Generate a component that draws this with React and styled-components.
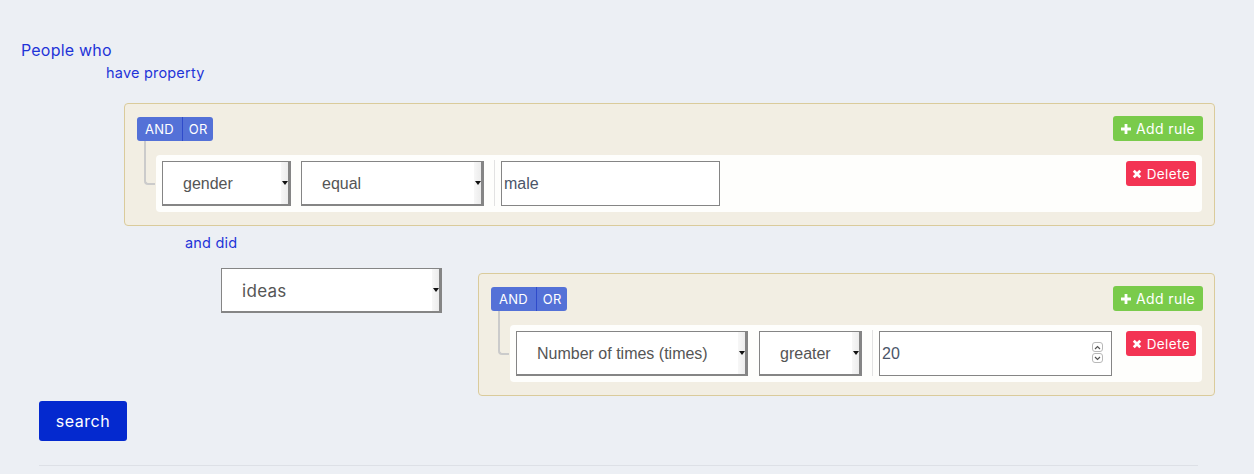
import React from 'react';
import styled, { createGlobalStyle } from 'styled-components';

const GlobalStyle = createGlobalStyle`
    html, body {
        margin: 0;
        padding: 0;
        background: #eceff4;
    }
    body {
        font-family: "Inter", "Open Sans", sans-serif;
    }
`;

const Page = styled.div`
    padding: 40px 39px 0 21px;
    display: flex;
    flex-direction: column;
    height: 474px;
    box-sizing: border-box;
`;

const Label = styled.div`
    color: #1f34d8;
    font-size: ${p => p.size || 14.5}px;
    letter-spacing: 0.2px;
    line-height: 20px;
    height: 20px;
    margin-left: ${p => p.indent || 0}px;
    margin-top: ${p => p.top || 0}px;
`;

const Group = styled.div`
    background: #f2eee3;
    border: 1px solid #dacb9b;
    border-radius: 4px;
    padding: 13px 11px 13px 12px;
    margin-left: ${p => p.indent || 0}px;
    margin-top: ${p => p.top || 0}px;
    flex: ${p => (p.grow ? 1 : 'none')};
`;

const GroupHeader = styled.div`
    display: flex;
    align-items: flex-start;
    justify-content: space-between;
    height: 24px;
`;

const Toggle = styled.div`
    display: flex;
    height: 24px;
    border-radius: 3px;
    overflow: hidden;
`;

const ToggleBtn = styled.button`
    border: none;
    background: #5471d7;
    color: #fff;
    font-family: inherit;
    font-size: 13px;
    letter-spacing: 0.2px;
    padding: 0 ${p => p.pad}px;
    cursor: pointer;
    & + & {
        border-left: 1px solid #2f4bca;
    }
`;

const SmallBtn = styled.button`
    display: flex;
    align-items: center;
    gap: 5px;
    border: none;
    border-radius: 3px;
    color: #fff;
    background: ${p => p.bg};
    font-family: inherit;
    font-size: ${p => p.size}px;
    letter-spacing: 0.4px;
    height: 25px;
    margin-top: ${p => p.top || 0}px;
    padding: 0 ${p => p.pad}px;
    cursor: pointer;
`;

const RuleRow = styled.div`
    position: relative;
    display: flex;
    align-items: flex-start;
    background: #fefefc;
    border-radius: 4px;
    padding: 6px;
    margin: 14px 1px 0 19px;

    &::before {
        content: '';
        position: absolute;
        left: -12px;
        top: -14px;
        width: 9px;
        height: 42px;
        border-left: 2px solid #cbcbcb;
        border-bottom: 2px solid #cbcbcb;
        border-bottom-left-radius: 4px;
    }
`;

const Select = styled.div`
    position: relative;
    display: flex;
    align-items: center;
    box-sizing: border-box;
    width: ${p => p.w}px;
    height: 45px;
    margin-right: ${p => p.gap || 0}px;
    background: #fff;
    border: 1px solid #858585;
    border-right-width: 3px;
    border-bottom-width: 2px;
    padding-left: 20px;
    padding-top: 1px;
    color: #555;
    font-family: ${p => (p.sans ? '"Liberation Sans", Arial, sans-serif' : 'inherit')};
    font-size: ${p => p.size || 16}px;
    letter-spacing: ${p => (p.sans ? 0 : 0.3)}px;
`;

const Strip = styled.span`
    position: absolute;
    right: 0;
    top: 0;
    bottom: 0;
    width: 7px;
    background: linear-gradient(to right, #f7f7f7, #ececec);
    display: flex;
    align-items: center;
    justify-content: center;

    &::after {
        content: '';
        border-left: 3px solid transparent;
        border-right: 3px solid transparent;
        border-top: 4px solid #111;
        margin-left: 1px;
    }
`;

const Divider = styled.div`
    width: 1px;
    height: 46px;
    background: #e2e2e2;
    margin: -1px 6px 0 0;
`;

const Input = styled.div`
    position: relative;
    box-sizing: border-box;
    width: ${p => p.w}px;
    height: 45px;
    border: 1px solid #858585;
    background: #fff;
    display: flex;
    align-items: center;
    padding-left: 2px;
    padding-top: 1px;
    color: #4b5568;
    font-family: "Liberation Sans", Arial, sans-serif;
    font-size: 16px;
`;

const Spinner = styled.div`
    position: absolute;
    right: 8px;
    top: 10px;
    display: flex;
    flex-direction: column;
    gap: 1px;
`;

const SpinBox = styled.span`
    width: 11px;
    height: 10px;
    box-sizing: border-box;
    border: 1px solid #b8b8b8;
    border-radius: 3px;
    display: flex;
    align-items: center;
    justify-content: center;
`;

const DeleteWrap = styled.div`
    margin-left: auto;
`;

const SecondRow = styled.div`
    display: flex;
    align-items: flex-start;
    margin-top: 15px;
    padding-left: 200px;
`;

const SearchButton = styled.button`
    align-self: flex-start;
    margin: 5px 0 0 18px;
    width: 88px;
    height: 40px;
    border: none;
    border-radius: 3px;
    background: #0429cf;
    color: #fff;
    font-family: inherit;
    font-size: 16px;
    letter-spacing: 0.5px;
    cursor: pointer;
`;

const Rule = styled.hr`
    border: none;
    border-top: 1px solid #dde0e6;
    margin: 24px 17px 0 18px;
`;

const PlusIcon = () => (
    <svg width="10" height="10" viewBox="0 0 10 10">
        <path d="M3.6 0h2.8v3.6H10v2.8H6.4V10H3.6V6.4H0V3.6h3.6z" fill="#fff" />
    </svg>
);

const TimesIcon = () => (
    <svg width="10" height="10" viewBox="0 0 10 10">
        <path d="M0.8 2.7L2.7 0.8 5 3.1 7.3 0.8 9.2 2.7 6.9 5 9.2 7.3 7.3 9.2 5 6.9 2.7 9.2 0.8 7.3 3.1 5z" fill="#fff" />
    </svg>
);

const Chevron = ({ up }) => (
    <svg width="7" height="5" viewBox="0 0 7 5">
        <path d={up ? 'M1 4L3.5 1.5 6 4' : 'M1 1L3.5 3.5 6 1'} stroke="#555" strokeWidth="1.2" fill="none" />
    </svg>
);

function GroupBlock({ indent, top, grow, children }) {
    return (
        <Group indent={indent} top={top} grow={grow}>
            <GroupHeader>
                <Toggle>
                    <ToggleBtn pad={8}>AND</ToggleBtn>
                    <ToggleBtn pad={6}>OR</ToggleBtn>
                </Toggle>
                <SmallBtn bg="#7acb4b" pad={8} size={14} top={-1}>
                    <PlusIcon />
                    Add rule
                </SmallBtn>
            </GroupHeader>
            <RuleRow>
                {children}
                <DeleteWrap>
                    <SmallBtn bg="#f33453" pad={6} size={13.5}>
                        <TimesIcon />
                        Delete
                    </SmallBtn>
                </DeleteWrap>
            </RuleRow>
        </Group>
    );
}

export default function App() {
    return (
        <>
            <GlobalStyle />
            <Page>
                <Label size={16}>People who</Label>
                <Label indent={85} top={3}>have property</Label>
                <GroupBlock indent={103} top={20}>
                    <Select w={129} gap={10} sans>gender<Strip /></Select>
                    <Select w={183} gap={10} sans>equal<Strip /></Select>
                    <Divider />
                    <Input w={219}>male</Input>
                </GroupBlock>
                <Label indent={164} top={7}>and did</Label>
                <SecondRow>
                    <Select w={221} gap={36} size={17}>ideas<Strip /></Select>
                    <GroupBlock top={5} grow>
                        <Select w={232} gap={11} sans>Number of times (times)<Strip /></Select>
                        <Select w={103} gap={10} sans>greater<Strip /></Select>
                        <Divider />
                        <Input w={233}>
                            20
                            <Spinner>
                                <SpinBox><Chevron up /></SpinBox>
                                <SpinBox><Chevron /></SpinBox>
                            </Spinner>
                        </Input>
                    </GroupBlock>
                </SecondRow>
                <SearchButton>search</SearchButton>
                <Rule />
            </Page>
        </>
    );
}
